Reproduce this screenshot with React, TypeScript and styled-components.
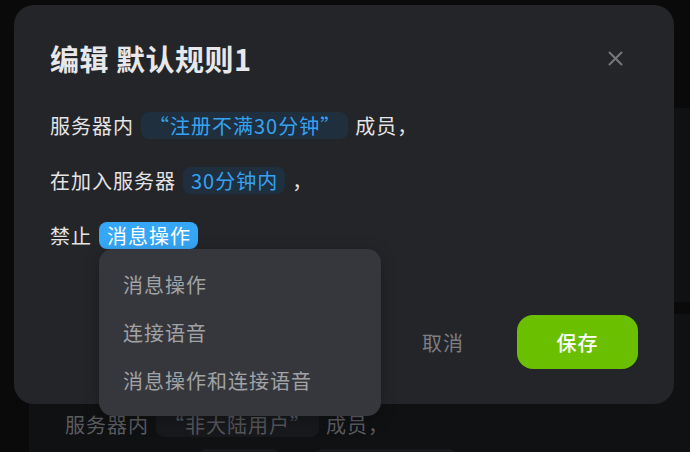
import React from 'react';
import styled, { createGlobalStyle } from 'styled-components';

const GlobalStyle = createGlobalStyle`
  html, body {
    margin: 0;
    padding: 0;
    background: #0a0a0b;
  }
  * {
    box-sizing: border-box;
  }
`;

const options = ['消息操作', '连接语音', '消息操作和连接语音'];

const App: React.FC = () => {
  return (
    <>
      <GlobalStyle />
      <Screen>
        {/* 背后的规则列表 */}
        <Backdrop>
          <BgCard $height={194} $padTop={0} />
          <BgCard $height={200} $padTop={97}>
            <BgRow>
              服务器内<BgTag>“非大陆用户”</BgTag>成员，
            </BgRow>
            <BgRow>
              在加入服务器<BgTag>24小时</BgTag>，<BgTag>禁止连接语音</BgTag>
            </BgRow>
          </BgCard>
        </Backdrop>

        <Modal>
          <Header>
            <Title>编辑 默认规则1</Title>
            <CloseButton aria-label="close">
              <svg width="15" height="15" viewBox="0 0 15 15">
                <path d="M1.5 1.5 L13.5 13.5 M13.5 1.5 L1.5 13.5" stroke="currentColor" strokeWidth="2" strokeLinecap="round" />
              </svg>
            </CloseButton>
          </Header>

          <Rules>
            <Row>
              服务器内<Tag>“注册不满30分钟”</Tag>成员，
            </Row>
            <Row>
              在加入服务器<Tag>30分钟内</Tag>，
            </Row>
            <Row>
              禁止
              <SelectWrap>
                <Tag $active>消息操作</Tag>
                <Menu>
                  {options.map((o) => (
                    <MenuItem key={o}>{o}</MenuItem>
                  ))}
                </Menu>
              </SelectWrap>
            </Row>
          </Rules>

          <Footer>
            <CancelButton>取消</CancelButton>
            <SaveButton>保存</SaveButton>
          </Footer>
        </Modal>
      </Screen>
    </>
  );
};

export default App;

const Screen = styled.div`
  position: relative;
  width: 690px;
  height: 452px;
  overflow: hidden;
  background: #0a0a0b;
  font-family: 'Noto Sans CJK SC', 'Noto Sans', sans-serif;
`;

const Backdrop = styled.div`
  display: flex;
  flex-direction: column;
  gap: 12px;
  padding: 108px 0 0 29px;
`;

const BgCard = styled.div<{ $height: number; $padTop: number }>`
  display: flex;
  flex-direction: column;
  gap: 12px;
  height: ${({ $height }) => $height}px;
  padding: ${({ $padTop }) => $padTop}px 0 0 36px;
  background: #101113;
  border-radius: 14px 0 0 14px;
`;

const BgRow = styled.div`
  display: flex;
  align-items: center;
  flex-shrink: 0;
  height: 26px;
  font-size: 20px;
  letter-spacing: 1px;
  color: #5b5c60;
  white-space: nowrap;
`;

const BgTag = styled.span`
  display: inline-flex;
  align-items: center;
  height: 26px;
  margin: 0 7px;
  padding: 0 8px;
  border-radius: 8px;
  background: #18191c;
  color: #55565a;
`;

const Modal = styled.div`
  position: absolute;
  left: 14px;
  top: 5px;
  width: 660px;
  height: 399px;
  display: flex;
  flex-direction: column;
  padding: 33px 36px 35px 36px;
  background: #242529;
  border-radius: 20px;
`;

const Header = styled.div`
  display: flex;
  align-items: center;
  justify-content: space-between;
  height: 40px;
`;

const Title = styled.h2`
  margin: 0;
  font-size: 29px;
  font-weight: 700;
  letter-spacing: 0.5px;
  color: #e8e8ea;
`;

const CloseButton = styled.button`
  display: flex;
  align-items: center;
  justify-content: center;
  width: 24px;
  height: 24px;
  margin-right: 11px;
  padding: 0;
  border: none;
  background: none;
  color: #76777b;
  cursor: pointer;
`;

const Rules = styled.div`
  display: flex;
  flex-direction: column;
  gap: 29px;
  margin-top: 34px;
`;

const Row = styled.div`
  display: flex;
  align-items: center;
  height: 26px;
  font-size: 20px;
  letter-spacing: 1px;
  color: #e4e4e6;
  white-space: nowrap;
`;

const Tag = styled.span<{ $active?: boolean }>`
  display: inline-flex;
  align-items: center;
  height: 27px;
  margin: 0 7px;
  padding: 0 7px 0 8px;
  border-radius: 8px;
  background: ${({ $active }) => ($active ? '#36a6f6' : '#1f2f3e')};
  color: ${({ $active }) => ($active ? '#ffffff' : '#36a2f2')};
  cursor: pointer;
`;

const SelectWrap = styled.div`
  position: relative;
  display: flex;
`;

const Menu = styled.div`
  position: absolute;
  left: 7px;
  top: 27px;
  width: 282px;
  padding: 12px 0 11px;
  background: #36373c;
  border-radius: 14px;
  box-shadow: 0 4px 16px rgba(0, 0, 0, 0.25);
  z-index: 2;
`;

const MenuItem = styled.div`
  display: flex;
  align-items: center;
  height: 48px;
  padding-left: 24px;
  font-size: 20px;
  letter-spacing: 1px;
  color: #a1a2a6;
  cursor: pointer;
`;

const Footer = styled.div`
  display: flex;
  align-items: center;
  justify-content: flex-end;
  gap: 24px;
  margin-top: auto;
`;

const CancelButton = styled.button`
  width: 100px;
  height: 54px;
  border: none;
  background: none;
  font-family: inherit;
  font-size: 20px;
  letter-spacing: 1px;
  color: #7d7e82;
  cursor: pointer;
`;

const SaveButton = styled.button`
  width: 121px;
  height: 54px;
  border: none;
  border-radius: 16px;
  background: #6abf00;
  font-family: inherit;
  font-size: 20px;
  font-weight: 500;
  letter-spacing: 1px;
  color: #ffffff;
  cursor: pointer;
`;
